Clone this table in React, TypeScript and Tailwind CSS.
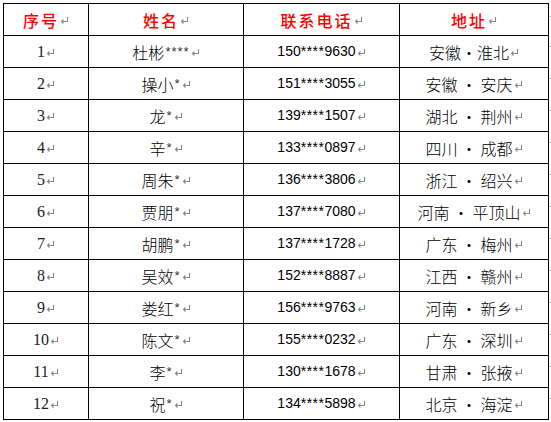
import React from "react";

type Row = { no: number; name: string; stars: string; phone: string; addr: string };

const rows: Row[] = [
  { no: 1, name: "杜彬", stars: "****", phone: "150****9630", addr: "安徽·淮北" },
  { no: 2, name: "操小", stars: "*", phone: "151****3055", addr: "安徽 · 安庆" },
  { no: 3, name: "龙", stars: "*", phone: "139****1507", addr: "湖北 · 荆州" },
  { no: 4, name: "辛", stars: "*", phone: "133****0897", addr: "四川 · 成都" },
  { no: 5, name: "周朱", stars: "*", phone: "136****3806", addr: "浙江 · 绍兴" },
  { no: 6, name: "贾朋", stars: "*", phone: "137****7080", addr: "河南 · 平顶山" },
  { no: 7, name: "胡鹏", stars: "*", phone: "137****1728", addr: "广东 · 梅州" },
  { no: 8, name: "吴效", stars: "*", phone: "152****8887", addr: "江西 · 赣州" },
  { no: 9, name: "娄红", stars: "*", phone: "156****9763", addr: "河南 · 新乡" },
  { no: 10, name: "陈文", stars: "*", phone: "155****0232", addr: "广东 · 深圳" },
  { no: 11, name: "李", stars: "*", phone: "130****1678", addr: "甘肃 · 张掖" },
  { no: 12, name: "祝", stars: "*", phone: "134****5898", addr: "北京 · 海淀" },
];

const cjk = "font-['SimSun','Noto_Sans_CJK_SC',sans-serif]";

// Word 的段落标记
function Mark() {
  return (
    <svg width="9" height="9" viewBox="0 0 9 9" className="ml-[1px] shrink-0 translate-y-[1px]">
      <path d="M7.5 1 V5.5 H2" fill="none" stroke="#8a8a8a" strokeWidth="1.1" />
      <path d="M3.5 3.5 L1.5 5.5 L3.5 7.5" fill="none" stroke="#8a8a8a" strokeWidth="1.1" />
    </svg>
  );
}

const cell = "flex h-[32px] items-center justify-center border-r border-b border-black";

export default function App() {
  return (
    <div className="h-[422px] w-[551px] overflow-hidden bg-white pl-[3px] pt-[3px]">
      {/* 表头 */}
      <div className="flex">
        <div className="flex border-t border-l border-black">
          {["序号", "姓名", "联系电话", "地址"].map((h, i) => (
            <div
              key={h}
              className={`${cell} ${["w-[85px]", "w-[155px]", "w-[156px]", "w-[149px]"][i]} ${cjk} text-[16px] font-medium tracking-[2px] text-[#ff0000]`}
            >
              {h}
              <Mark />
            </div>
          ))}
        </div>
        <div className="w-[3px] pt-[13px]">
          <div className="ml-[1px] h-[1px] w-[2px] bg-[#999]" />
        </div>
      </div>

      {rows.map((r) => (
        <div key={r.no} className="flex">
          <div className="flex border-l border-black">
            <div className={`${cell} w-[85px] font-['Liberation_Serif',serif] text-[16px] text-[#222]`}>
              {r.no}
              <Mark />
            </div>
            <div className={`${cell} w-[155px] ${cjk} text-[16px] font-light text-black`}>
              {r.name}
              <span className="ml-[1px] font-['Liberation_Sans',sans-serif] text-[13px] tracking-[1px] text-[#333]">
                {r.stars}
              </span>
              <Mark />
            </div>
            <div className={`${cell} w-[156px] font-['Liberation_Sans',sans-serif] text-[14px] text-black`}>
              {r.phone.slice(0, 3)}
              <span className="text-[14px] tracking-[0.5px]">****</span>
              {r.phone.slice(7)}
              <Mark />
            </div>
            <div className={`${cell} w-[149px] ${cjk} text-[16px] font-light text-black`}>
              <span className="whitespace-pre">{r.addr}</span>
              <Mark />
            </div>
          </div>
          <div className="w-[3px] pt-[10px]">
            <div className="ml-[1px] h-[1px] w-[2px] bg-[#999]" />
          </div>
        </div>
      ))}
    </div>
  );
}
